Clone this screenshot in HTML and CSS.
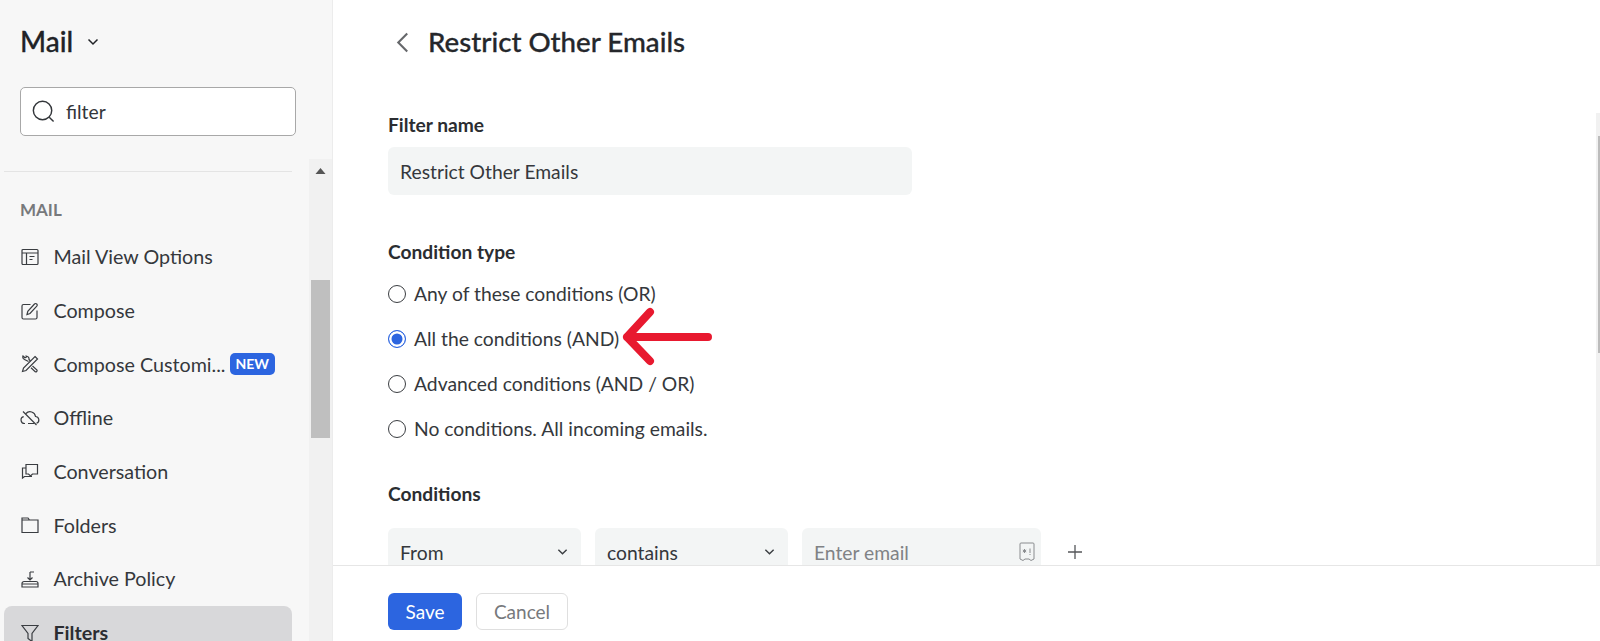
FILE: index.html
```html
<!DOCTYPE html>
<html lang="en">
<head>
<meta charset="utf-8">
<title>Restrict Other Emails</title>
<link rel="stylesheet" href="styles.css">
</head>
<body>
<div class="app">
  <aside class="sidebar">
    <div class="brand"><span>Mail</span>
      <svg class="brand-caret" viewBox="0 0 12 8"><path d="M1.500 1.500 6 6l4.500-4.500"/></svg>
    </div>
    <div class="search">
      <svg class="search-icon" viewBox="0 0 24 24"><circle cx="11" cy="11" r="9.600"/><path d="m18 18 4.500 4.500"/></svg>
      <span>filter</span>
    </div>
    <div class="divider"></div>
    <div class="nav-wrap">
      <nav class="nav">
        <div class="nav-head">MAIL</div>
        <div class="nav-item">
          <svg class="ico" viewBox="0 0 18 18"><rect x="1" y="1.500" width="16" height="15" rx="1"/><path d="M1 5h16M5.500 5v11.500M8.500 8.500h5M8.500 11.500h3"/></svg>
          <span>Mail View Options</span>
        </div>
        <div class="nav-item">
          <svg class="ico" viewBox="0 0 18 18"><path d="M9.500 2.500H2.500a1.500 1.500 0 0 0-1.500 1.500v11.500A1.500 1.500 0 0 0 2.500 17h12a1.500 1.500 0 0 0 1.500-1.500V8.500"/><path d="M6 12.500l.8-3.200 6.700-7.300a1.400 1.400 0 0 1 2.300 2.200L9 11.500z"/></svg>
          <span>Compose</span>
        </div>
        <div class="nav-item">
          <svg class="ico" viewBox="0 0 18 18"><path d="M14 1.500 16.500 4 5 15.500l-3.500 1 1-3.500z"/><path d="M7.500 6.500 3.500 4.500A2.800 2.800 0 0 1 2 1l2 1.800L5.500 2 5.200 1A3 3 0 0 1 8 4.500L9.500 6M11.500 11 16 15a1.400 1.400 0 0 1-1.800 1.800L10 12.800"/></svg>
          <span class="truncated">Compose Customi...</span><span class="badge">NEW</span>
        </div>
        <div class="nav-item">
          <svg class="ico ico-wide" viewBox="0 0 20 18"><path d="M5 14.500H4.500a3.500 3.500 0 0 1-.8-6.900M6 4.500A5.500 5.500 0 0 1 15.500 7.500a3.500 3.500 0 0 1 1 6.800M8 14.500h6M3 2.500 16.500 16"/></svg>
          <span>Offline</span>
        </div>
        <div class="nav-item">
          <svg class="ico" viewBox="0 0 18 18"><path d="M5 1.500h11.500v9.500h-5l-2 2-2-2H5z"/><path d="M5 5H1.500v10l2-1.500H11"/></svg>
          <span>Conversation</span>
        </div>
        <div class="nav-item">
          <svg class="ico" viewBox="0 0 18 18"><path d="M1 16.500V2h6l1.500 2H17v12.500zM8.500 4H1"/></svg>
          <span>Folders</span>
        </div>
        <div class="nav-item">
          <svg class="ico" viewBox="0 0 18 18"><path d="M3 11.500h2.500M12.500 11.500H15a2 2 0 0 1 2 2v3.500H1v-3.500a2 2 0 0 1 2-2zM1 14h16M9 2v8M6.500 7.500 9 10l2.500-2.500M9 2h4"/></svg>
          <span>Archive Policy</span>
        </div>
        <div class="nav-item nav-item-active">
          <svg class="ico" viewBox="0 0 18 18"><path d="M1 1.500h16L11 9.500v8l-4-3v-5z"/></svg>
          <span>Filters</span>
        </div>
      </nav>
      <div class="side-scroll">
        <svg class="side-up" viewBox="0 0 10 6"><path d="M5 0 10 6H0z"/></svg>
        <div class="side-thumb"></div>
      </div>
    </div>
  </aside>
  <main class="main">
    <div class="pane">
      <header class="title-row">
        <svg class="back" viewBox="0 0 12 20"><path d="M10.500 1.500 2 10l8.500 8.500"/></svg>
        <h1>Restrict Other Emails</h1>
      </header>
      <section class="form">
        <h2 class="label label-first">Filter name</h2>
        <div class="field field-name">Restrict Other Emails</div>
        <h2 class="label label-cond">Condition type</h2>
        <div class="radios">
          <div class="radio-row"><span class="radio"></span>Any of these conditions (OR)</div>
          <div class="radio-row"><span class="radio radio-on"></span>All the conditions (AND)</div>
          <div class="radio-row"><span class="radio"></span>Advanced conditions (AND / OR)</div>
          <div class="radio-row"><span class="radio"></span>No conditions. All incoming emails.</div>
        </div>
        <h2 class="label label-conds">Conditions</h2>
        <div class="cond-row">
          <div class="field select">From
            <svg class="caret" viewBox="0 0 12 8"><path d="M1.500 1.500 6 6l4.500-4.500"/></svg>
          </div>
          <div class="field select">contains
            <svg class="caret" viewBox="0 0 12 8"><path d="M1.500 1.500 6 6l4.500-4.500"/></svg>
          </div>
          <div class="field email"><span class="placeholder">Enter email</span>
            <svg class="tag" viewBox="0 0 16 20"><path d="M1 2a1 1 0 0 1 1-1h12a1 1 0 0 1 1 1v15l-3 1.500-2-1.500H6l-2 1.500L1 17z"/><path d="M5.500 7v4M3.800 8l3.400 2M7.200 8l-3.400 2M11 6.500v4.500M11 12v1"/></svg>
          </div>
          <svg class="plus" viewBox="0 0 16 16"><path d="M8 1v14M1 8h14"/></svg>
        </div>
      </section>
      <div class="main-scroll"><div class="main-thumb"></div></div>
    </div>
    <footer class="actions">
      <button class="btn btn-primary">Save</button>
      <button class="btn btn-ghost">Cancel</button>
    </footer>
  </main>
</div>
<svg class="annotation" viewBox="0 0 100 64"><path d="M90 30H9M32 5 9 30l23 24"/></svg>
</body>
</html>
```
FILE: styles.css
```css
* { box-sizing: border-box; }
html, body { margin: 0; height: 100%; overflow: hidden; }
body { font-family: Lato, "Open Sans", sans-serif; color: #2b2d31; background: #fff; }
svg { display: block; fill: none; stroke: currentColor; }
.app { display: flex; height: 641px; }

.sidebar { width: 333px; flex: none; background: #f7f7f7; display: flex; flex-direction: column; border-right: 1px solid #ececec; }
.brand { display: flex; gap: 14px; padding: 24px 0 0 20px; height: 87px; align-items: flex-start; font-size: 28px; font-weight: 500; line-height: 34px; color: #212327; -webkit-text-stroke: 0.3px #212327; }
.brand-caret { width: 12px; height: 8px; margin-top: 14px; stroke-width: 1.500; }
.search { margin-left: 20px; width: 276px; height: 49px; background: #fff; border: 1px solid #a8a8a8; border-radius: 5px; display: flex; align-items: center; padding-left: 11px; gap: 11px; font-size: 19.300px; color: #33363a; }
.search-icon { width: 23px; height: 23px; stroke-width: 1.500; }
.divider { margin: 35px 0 0 4px; width: 288px; border-top: 1px solid #e4e4e4; height: 1px; }
.nav-wrap { flex: 1; position: relative; overflow: hidden; margin-top: -13px; }
.nav { padding: 41px 0 0 4px; width: 292px; }
.nav-head { padding-left: 16px; font-size: 17px; font-weight: 700; line-height: 20px; color: #77797c; margin-bottom: 10px; }
.nav-item { height: 53.700px; display: flex; align-items: center; padding-left: 17px; font-size: 19.700px; color: #35383c; border-radius: 8px; flex: none; }
.nav-item .ico { margin-right: 14.500px; }
.ico { width: 18px; height: 18px; flex: none; stroke-width: 1.200; color: #3a3d41; }
.nav-item .ico-wide { width: 20px; margin-left: -1px; margin-right: 13.500px; }
.nav-item-active { background: #d8d8da; font-weight: 700; color: #2b2d31; }
.truncated { white-space: nowrap; }
.badge { margin-left: 4px; background: #2c65e0; color: #fff; font-size: 14px; font-weight: 700; line-height: 22px; height: 22px; padding: 0 6px; border-radius: 5px; }
.side-scroll { position: absolute; right: 0; top: 0; bottom: 0; width: 23px; background: #f1f1f1; }
.side-up { position: absolute; left: 6px; top: 9px; width: 11px; height: 6px; fill: #555; stroke: none; }
.side-thumb { position: absolute; left: 2px; right: 2px; top: 121px; height: 158px; background: #bfbfbf; }

.main { flex: 1; min-width: 0; display: flex; flex-direction: column; }
.pane { flex: none; height: 565px; position: relative; overflow: hidden; }
.title-row { display: flex; align-items: center; height: 84px; padding-left: 63px; gap: 19px; }
.back { width: 13px; height: 21px; stroke-width: 2; color: #66686b; }
h1 { margin: 0; font-size: 27.700px; font-weight: 500; color: #25272b; line-height: 34px; -webkit-text-stroke: 0.3px #25272b; }
.form { padding-left: 55px; }
.label { margin: 0; font-size: 19.200px; font-weight: 700; line-height: 24px; color: #2b2d31; }
.label-first { padding-top: 29px; box-sizing: content-box; }
.label-cond { margin-top: 45px; }
.label-conds { margin-top: 31px; }
.field { background: #f3f5f5; border-radius: 6px; font-size: 19.300px; display: flex; align-items: center; padding-left: 12px; color: #35383c; }
.field-name { width: 524px; height: 48px; margin-top: 10px; }
.radios { margin-top: 7px; }
.radio-row { display: flex; align-items: center; height: 45px; font-size: 19.300px; color: #35383c; gap: 8px; }
.radio { width: 18px; height: 18px; border: 1.500px solid #3a3d41; border-radius: 50%; background: #fff; flex: none; }
.radio-on { border-color: #2c65e0; background: #2c65e0; box-shadow: inset 0 0 0 2.500px #fff; }
.cond-row { display: flex; align-items: center; gap: 14px; margin-top: 22px; }
.select { width: 193px; height: 48px; justify-content: space-between; padding-right: 13px; }
.email { width: 239px; height: 48px; justify-content: space-between; padding-right: 5px; }
.caret { width: 11px; height: 8px; stroke-width: 1.500; color: #3a3d41; }
.placeholder { color: #808285; }
.tag { width: 18px; height: 20px; stroke-width: 1; color: #8a8c8f; }
.plus { width: 16px; height: 16px; margin-left: 12px; stroke-width: 1.300; color: #55575a; }
.main-scroll { position: absolute; right: 0; top: 113px; bottom: 0; width: 4px; background: #f1f1f1; }
.main-thumb { position: absolute; right: 0; top: 23px; width: 2px; height: 217px; background: #bcbcbc; }

.actions { flex: 1; border-top: 1px solid #e6e6e6; display: flex; align-items: flex-start; padding: 27px 0 0 55px; gap: 14px; }
.btn { height: 37px; border-radius: 6px; font: 400 19px Lato, "Open Sans", sans-serif; padding: 0; }
.btn-primary { width: 74px; background: #2c65e0; border: 0; color: #fff; }
.btn-ghost { width: 92px; background: #fff; border: 1px solid #dfdfdf; color: #77797c; }

.annotation { position: absolute; left: 618px; top: 307px; width: 100px; height: 64px; stroke: #e8192f; stroke-width: 8; stroke-linecap: round; stroke-linejoin: round; }
```
